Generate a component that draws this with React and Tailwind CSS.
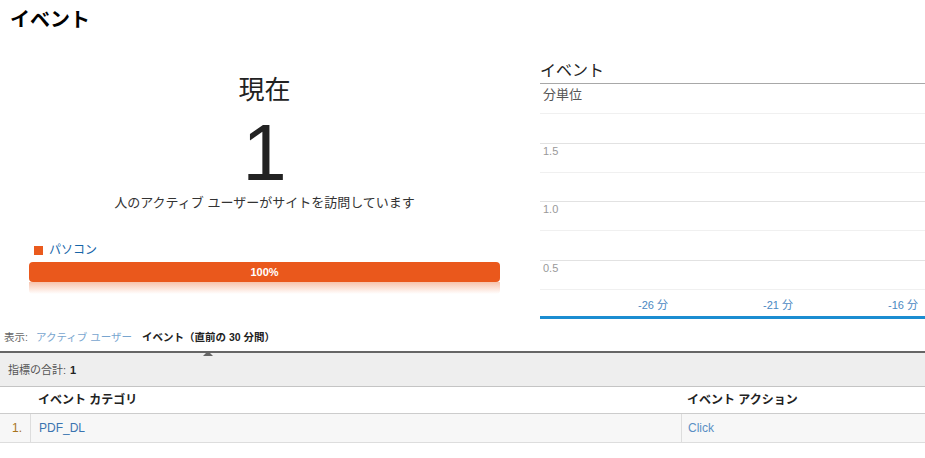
import React from "react";

const JP = { fontFamily: '"Liberation Sans", "Noto Sans CJK JP", sans-serif' };

function GridRow({ h, strong, label }) {
  return (
    <div
      className={`${h} border-t ${strong ? "border-[#e2e2e2]" : "border-[#f0f0f0]"} pl-[3px]`}
    >
      {label && (
        <div className="text-[11px] leading-[14px] text-[#999]">{label}</div>
      )}
    </div>
  );
}

export default function App() {
  return (
    <div className="w-[925px] h-[458px] overflow-hidden bg-white text-[#222]" style={JP}>
      {/* Title */}
      <div className="h-[40px] pl-[10px] pt-[6px]">
        <div className="text-[20px] leading-[28px] font-bold text-black">イベント</div>
      </div>

      {/* Main */}
      <div className="flex h-[279px]">
        {/* Left */}
        <div className="w-[540px] pl-[29px] pr-[40px] pt-[35px]">
          <div className="text-center text-[26px] leading-[30px] text-[#222]">現在</div>
          <div className="mt-[8px] text-center text-[80px] leading-[80px] text-[#222]">1</div>
          <div className="text-center text-[13px] leading-[20px] text-[#333]">
            人のアクティブ ユーザーがサイトを訪問しています
          </div>
          <div className="mt-[28px] flex h-[18px] items-center pl-[5px]">
            <div className="h-[9px] w-[9px] bg-[#ea5a1d]" />
            <div className="ml-[6px] text-[12px] leading-[18px] text-[#1565a8]">パソコン</div>
          </div>
          <div className="mt-[3px] flex h-[20px] items-center justify-center rounded-[4px] bg-[#ea581c]">
            <span className="text-[11px] font-bold leading-[14px] text-white">100%</span>
          </div>
          <div className="h-[12px] rounded-b-[4px] bg-gradient-to-b from-[#f6c3ad] to-white" />
        </div>

        {/* Right */}
        <div className="flex-1 pt-[19px]">
          <div className="border-b border-[#a8a8a8] text-[16px] leading-[24px] text-[#222]">イベント</div>
          <div className="h-[29px] pl-[3px] pt-[3px] text-[13px] leading-[16px] text-[#555]">分単位</div>
          <GridRow h="h-[30px]" />
          <GridRow h="h-[29px]" strong label="1.5" />
          <GridRow h="h-[29px]" />
          <GridRow h="h-[29px]" strong label="1.0" />
          <GridRow h="h-[30px]" />
          <GridRow h="h-[29px]" strong label="0.5" />
          <div className="flex h-[27px] items-center border-t border-[#f0f0f0] pl-[93px] pt-[3px]">
            <div className="w-[40px] text-center text-[11px] leading-[14px] text-[#4a88c2]">-26 分</div>
            <div className="ml-[85px] w-[40px] text-center text-[11px] leading-[14px] text-[#4a88c2]">-21 分</div>
            <div className="ml-[85px] w-[40px] text-center text-[11px] leading-[14px] text-[#4a88c2]">-16 分</div>
          </div>
          <div className="h-[3px] bg-[#1b8dd1]" />
        </div>
      </div>

      {/* Tabs */}
      <div className="flex h-[32px] items-center pl-[4px] pt-[3px] text-[10.5px] leading-[16px]">
        <span className="text-[#666]">表示:</span>
        <span className="ml-[8px] text-[#78a5cf]">アクティブ ユーザー</span>
        <span className="relative ml-[10px] font-bold text-[#222]">
          イベント（直前の 30 分間）
          <span className="absolute left-1/2 top-[22px] -ml-[5px] h-0 w-0 border-x-[5px] border-b-[5px] border-x-transparent border-b-[#666]" />
        </span>
      </div>
      <div className="h-[2px] bg-[#666]" />

      {/* Totals */}
      <div className="flex h-[34px] items-center border-b border-[#c4c4c4] bg-[#eeeeee] pl-[8px] text-[11px] leading-[16px]">
        <span className="text-[#555]">指標の合計:</span>
        <span className="ml-[4px] font-bold text-[#222]">1</span>
      </div>

      {/* Table header */}
      <div className="grid h-[27px] grid-cols-[31px_651px_1fr] border-b border-[#cccccc] text-[12px] font-bold leading-[16px] text-[#222]">
        <div />
        <div className="flex items-center pl-[7px]">イベント カテゴリ</div>
        <div className="flex items-center pl-[5px]">イベント アクション</div>
      </div>

      {/* Row */}
      <div className="grid h-[29px] grid-cols-[31px_651px_1fr] border-b border-[#dddddd] bg-[#f7f7f7] text-[12px] leading-[16px]">
        <div className="flex items-center justify-end border-r border-[#dddddd] pr-[8px] text-[#a8741c]">1.</div>
        <div className="flex items-center border-r border-[#dddddd] pl-[8px] text-[#3a74b0]">PDF_DL</div>
        <div className="flex items-center pl-[6px] text-[#5a8fc4]">Click</div>
      </div>
    </div>
  );
}
